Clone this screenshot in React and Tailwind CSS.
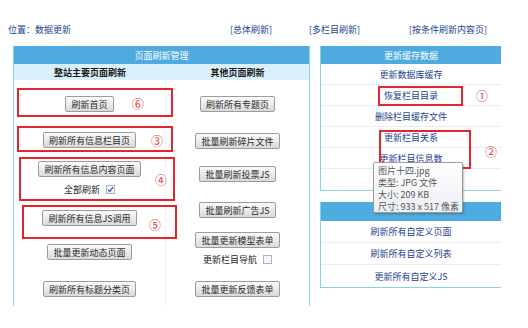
import React from "react";

function Btn({ children, className = "" }) {
  return (
    <div
      className={
        "h-[16px] px-[5px] flex items-center justify-center whitespace-nowrap border border-[#9c9c9c] rounded-[2px] bg-linear-to-b from-[#fbfbfb] to-[#dadada] text-[#2a2a2a] text-[9px] leading-none " +
        className
      }
    >
      {children}
    </div>
  );
}

function Check({ checked }) {
  return (
    <span className="inline-flex w-[9px] h-[9px] border border-[#a8b4c4] bg-[#f4f6fa] items-center justify-center">
      {checked ? (
        <svg width="7" height="7" viewBox="0 0 7 7">
          <path d="M1 3.6 L2.8 5.4 L6 1.2" stroke="#3b5fb0" strokeWidth="1.3" fill="none" />
        </svg>
      ) : null}
    </span>
  );
}

function Row({ children, h = "h-[21px]", last = false }) {
  return (
    <div
      className={
        h +
        " flex items-center justify-center text-[#24418f] " +
        (last ? "" : "border-b border-[#e7eef3]")
      }
    >
      {children}
    </div>
  );
}

function Num({ x, y, children }) {
  return (
    <span
      className="absolute w-[14px] text-center text-[12px] leading-[16px] text-[#e23a3a]"
      style={{ left: x - 7, top: y - 8 }}
    >
      {children}
    </span>
  );
}

export default function App() {
  return (
    <div className="w-[528px] h-[328px] bg-white relative overflow-hidden font-['Noto_Sans_CJK_SC',sans-serif] text-[9px]">
      {/* top links */}
      <div className="flex items-center h-[10px] mt-[24px] text-[#24418f] leading-none whitespace-nowrap">
        <span className="ml-[8px] w-[222px]">位置：数据更新</span>
        <span className="w-[79px]">[总体刷新]</span>
        <span className="w-[100px]">[多栏目刷新]</span>
        <span>[按条件刷新内容页]</span>
      </div>

      <div className="flex mt-[12px] items-start">
        {/* left panel */}
        <div className="ml-[13px] w-[297px] h-[260px] border-l border-r border-[#86d3e3] flex flex-col">
          <div className="h-[18px] bg-[#4dabdf] text-white flex items-center justify-center leading-none">
            页面刷新管理
          </div>
          <div className="h-[16px] bg-[#d9f0fa] flex items-center font-bold text-[#1a1a1a] leading-none">
            <div className="w-[152px] text-center">整站主要页面刷新</div>
            <div className="flex-1 text-center">其他页面刷新</div>
          </div>
          <div className="flex flex-1">
            <div className="w-[152px] border-r border-[#eaf4f8] flex flex-col items-center">
              <Btn className="mt-[16px]">刷新首页</Btn>
              <Btn className="mt-[20px]">刷新所有信息栏目页</Btn>
              <Btn className="mt-[13px]">刷新所有信息内容页面</Btn>
              <div className="mt-[6px] h-[12px] flex items-center gap-[6px] text-[#222] leading-none">
                <span>全部刷新</span>
                <Check checked />
              </div>
              <Btn className="mt-[15px]">刷新所有信息JS调用</Btn>
              <Btn className="mt-[18px]">批量更新动态页面</Btn>
              <Btn className="mt-[21px]">刷新所有标题分类页</Btn>
            </div>
            <div className="flex-1 flex flex-col items-center">
              <Btn className="mt-[16px]">刷新所有专题页</Btn>
              <Btn className="mt-[21px]">批量刷新碎片文件</Btn>
              <Btn className="mt-[17px]">批量刷新投票JS</Btn>
              <Btn className="mt-[20px]">批量刷新广告JS</Btn>
              <Btn className="mt-[14px]">批量更新模型表单</Btn>
              <div className="mt-[5px] h-[12px] flex items-center gap-[6px] text-[#222] leading-none">
                <span>更新栏目导航</span>
                <Check />
              </div>
              <Btn className="mt-[16px]">批量更新反馈表单</Btn>
            </div>
          </div>
        </div>

        {/* right panels */}
        <div className="ml-[10px] w-[181px] flex flex-col">
          <div className="border-l border-b border-[#86d3e3] flex flex-col leading-none">
            <div className="h-[18px] bg-[#4dabdf] text-white flex items-center justify-center">
              更新缓存数据
            </div>
            <Row>更新数据库缓存</Row>
            <Row>恢复栏目目录</Row>
            <Row>删除栏目缓存文件</Row>
            <Row>更新栏目关系</Row>
            <Row>更新栏目信息数</Row>
            <Row last />
          </div>
          <div className="mt-[11px] border-l border-b border-[#86d3e3] flex flex-col leading-none">
            <div className="h-[19px] bg-[#4dabdf]" />
            <Row h="h-[22px]">刷新所有自定义页面</Row>
            <Row h="h-[22px]">刷新所有自定义列表</Row>
            <Row h="h-[22px]" last>更新所有自定义JS</Row>
          </div>
        </div>
      </div>

      {/* annotation boxes */}
      <div className="absolute left-[17px] top-[88px] w-[156px] h-[29px] border-2 border-[#e4262c]" />
      <div className="absolute left-[17px] top-[126px] w-[156px] h-[26px] border-2 border-[#e4262c]" />
      <div className="absolute left-[19px] top-[157px] w-[156px] h-[44px] border-2 border-[#e4262c]" />
      <div className="absolute left-[22px] top-[205px] w-[155px] h-[34px] border-2 border-[#e4262c]" />
      <div className="absolute left-[378px] top-[86px] w-[85px] h-[20px] border-2 border-[#e4262c]" />
      <div className="absolute left-[379px] top-[130px] w-[92px] h-[39px] border-2 border-[#e4262c]" />

      <Num x={138} y={104}>⑥</Num>
      <Num x={157} y={141}>③</Num>
      <Num x={161} y={180}>④</Num>
      <Num x={155} y={225}>⑤</Num>
      <Num x={482} y={96}>①</Num>
      <Num x={491} y={152}>②</Num>

      {/* tooltip */}
      <div className="absolute left-[373px] top-[162px] w-[90px] h-[51px] border border-[#9a9a9a] rounded-[2px] bg-linear-to-b from-[#ffffff] to-[#eceef2] shadow-[1px_1px_2px_rgba(0,0,0,0.25)] px-[4px] pt-[2px] text-[9px] leading-[12px] text-[#575757] whitespace-nowrap font-['Noto_Sans_CJK_SC',sans-serif]">
        <div>图片十四.jpg</div>
        <div>类型: JPG 文件</div>
        <div>大小: 209 KB</div>
        <div>尺寸: 933 x 517 像素</div>
      </div>
    </div>
  );
}
